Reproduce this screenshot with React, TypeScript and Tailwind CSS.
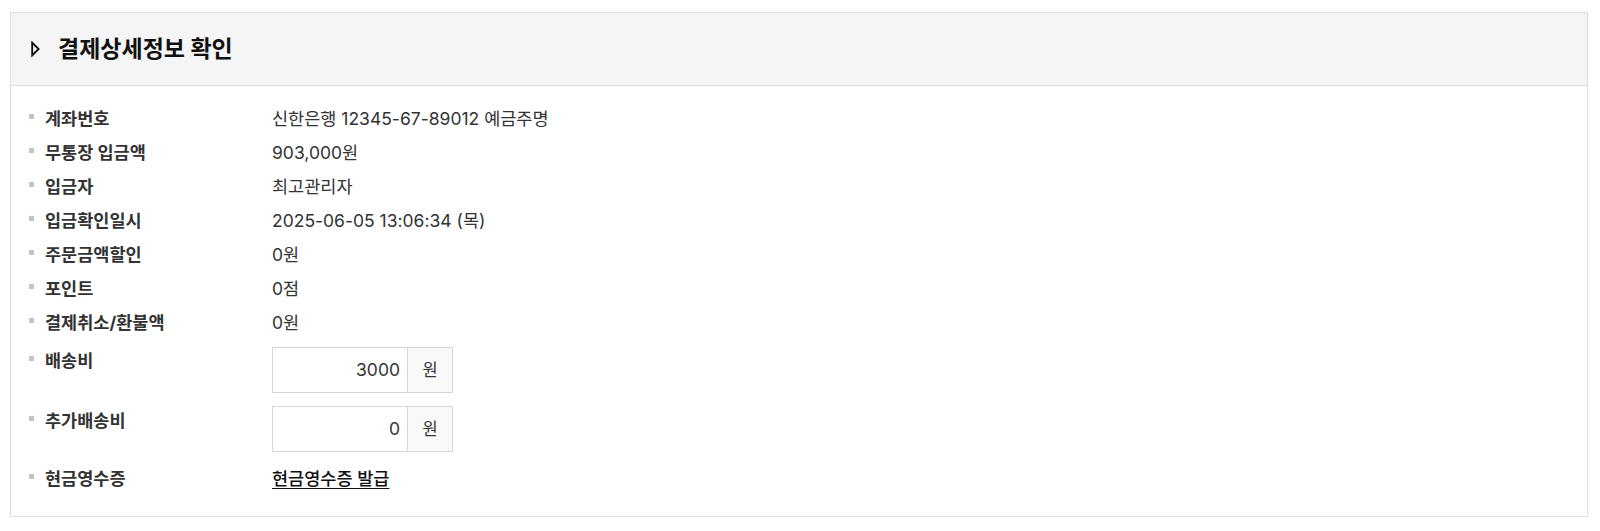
import React from "react";

const font = { fontFamily: '"Inter", "Noto Sans CJK KR", sans-serif' };

type Row = { label: string; value: string };

const rows: Row[] = [
  { label: "계좌번호", value: "신한은행 12345-67-89012 예금주명" },
  { label: "무통장 입금액", value: "903,000원" },
  { label: "입금자", value: "최고관리자" },
  { label: "입금확인일시", value: "2025-06-05 13:06:34 (목)" },
  { label: "주문금액할인", value: "0원" },
  { label: "포인트", value: "0점" },
  { label: "결제취소/환불액", value: "0원" },
];

function Label({ children }: { children: React.ReactNode }) {
  return (
    <div className="flex items-start w-[243px] shrink-0">
      <span className="block w-[5px] h-[5px] bg-[#c4c4c4] mt-[12px] mr-[11px] shrink-0" />
      <span className="font-bold text-[#333] leading-[34px]">{children}</span>
    </div>
  );
}

function MoneyInput({ value }: { value: string }) {
  return (
    <div className="flex w-[181px] h-[46px] border border-[#d6d6d6]">
      <input
        readOnly
        defaultValue={value}
        className="flex-1 min-w-0 text-right pr-[7px] text-[17.5px] text-[#333] outline-none bg-white"
      />
      <span className="w-[45px] shrink-0 border-l border-[#d6d6d6] bg-[#f9f9f9] flex items-center justify-center text-[16.5px] text-[#333]">
        원
      </span>
    </div>
  );
}

export default function App() {
  return (
    <div className="bg-white min-h-[531px] pt-[12px] pl-[10px] pr-[12px]" style={font}>
      <div className="border border-[#dedede]">
        {/* Header */}
        <div className="h-[73px] flex items-center pl-[20px] bg-[#f5f5f5] border-b border-[#dedede]">
          <svg width="9" height="16" viewBox="0 0 9 16" className="mr-[18px]">
            <path d="M1.2 1.6 L7.6 8 L1.2 14.4 Z" fill="none" stroke="#111" strokeWidth="1.9" strokeLinejoin="miter" />
          </svg>
          <h2 className="text-[23px] font-bold text-[#111]">결제상세정보 확인</h2>
        </div>

        {/* Body */}
        <div className="pt-[16px] pb-[20px] pl-[18px] text-[17.5px]">
          {rows.map((r) => (
            <div key={r.label} className="flex items-start">
              <Label>{r.label}</Label>
              <span className="leading-[34px] text-[#333]">{r.value}</span>
            </div>
          ))}

          <div className="flex items-start pt-[7px] pb-[6px]">
            <div className="mt-[-3px]">
              <Label>배송비</Label>
            </div>
            <MoneyInput value="3000" />
          </div>

          <div className="flex items-start pt-[7px] pb-[6px]">
            <div className="mt-[-2px]">
              <Label>추가배송비</Label>
            </div>
            <MoneyInput value="0" />
          </div>

          <div className="flex items-start mt-[4px]">
            <Label>현금영수증</Label>
            <a href="#" className="leading-[34px] text-[#111] font-medium underline underline-offset-[3px]">
              현금영수증 발급
            </a>
          </div>
        </div>
      </div>
    </div>
  );
}
